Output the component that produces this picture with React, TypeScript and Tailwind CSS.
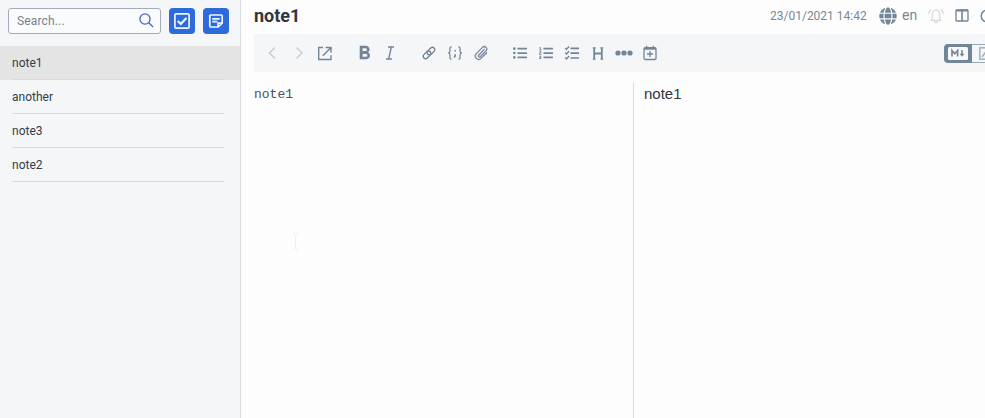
import type { ReactNode } from "react";
import { FaGlobe, FaListUl, FaListOl } from "react-icons/fa";
import { MdFormatBold } from "react-icons/md";

const notes = ["note1", "another", "note3", "note2"];

function Stroke({ size = 16, width = 1.5, children }: { size?: number; width?: number; children: ReactNode }) {
  return (
    <svg width={size} height={size} viewBox="0 0 16 16" fill="none" stroke="currentColor" strokeWidth={width}>
      {children}
    </svg>
  );
}

function Cell({ children }: { children: ReactNode }) {
  return <span className="flex h-[26px] w-[26px] shrink-0 items-center justify-center">{children}</span>;
}

function Sidebar() {
  return (
    <aside className="flex w-[241px] shrink-0 flex-col border-r border-[#d9dbde] bg-[#f4f6f8]">
      <div className="flex h-[46px] items-start gap-2 pl-2 pt-2">
        <div className="flex h-[26px] w-[153px] items-center justify-between rounded-[3px] border border-[#a3adb9] bg-[#fafbfc] pl-2 pr-[6px]">
          <span className="text-[12px] leading-[15px] tracking-[0.15px] text-[#77818d]">Search...</span>
          <svg width="16" height="16" viewBox="0 0 16 16" fill="none" stroke="#4664c0" strokeWidth="1.3" className="-translate-y-px">
            <circle cx="7" cy="7" r="5.1" />
            <path d="M10.8 10.8 15 15" />
          </svg>
        </div>
        <div className="flex h-[26px] w-[26px] items-center justify-center rounded-[4px] bg-[#2d6bdc] text-[#eef4ff]">
          <Stroke width={1.7}>
            <rect x="0.9" y="0.9" width="14.2" height="14.2" rx="1.2" />
            <path d="m3.8 8 3 3 5.6-6" strokeWidth="2.2" />
          </Stroke>
        </div>
        <div className="flex h-[26px] w-[26px] items-center justify-center rounded-[4px] bg-[#2d6bdc] text-[#eef4ff]">
          <Stroke width={1.7}>
            <path d="M2.8 2h10.4a1 1 0 0 1 1 1v7.2L10.3 14H2.8a1 1 0 0 1-1-1V3a1 1 0 0 1 1-1ZM10 14v-3.8h4.2" />
            <path d="M4.3 5.8h7.4M4.3 8.6h5" />
          </Stroke>
        </div>
      </div>
      <ul>
        {notes.map((note, i) => (
          <li key={note} className={`flex h-[34px] pl-3 pr-4 text-[12px] text-[#353d48] ${i === 0 ? "bg-[#e4e4e4]" : ""}`}>
            <span className="w-full border-b border-[#d8dadd] leading-[35px]">{note}</span>
          </li>
        ))}
      </ul>
    </aside>
  );
}

function TitleBar() {
  return (
    <header className="flex h-[34px] items-start text-[#738598]">
      <h1 className="flex-1 text-[18px] font-bold leading-[31px] text-[#303640]">note1</h1>
      <div className="flex h-[31px] w-[215px] shrink-0 items-center overflow-hidden whitespace-nowrap">
        <span className="w-[109px] shrink-0 text-[12px] text-[#7c8794]">23/01/2021 14:42</span>
        <FaGlobe size={18} className="shrink-0" />
        <span className="ml-[5px] w-[26px] shrink-0 text-[14px] text-[#7c8794]">en</span>
        <svg className="shrink-0" width="16" height="16" viewBox="0 0 16 16" fill="none" stroke="#d0d4d9" strokeWidth="1.1">
          <path d="M8 1v1M3.2 12.3c1.3-1.3 1-2.6 1-4.7C4.2 4.3 5.5 2 8 2s3.8 2.3 3.8 5.6c0 2.1-.3 3.4 1 4.7H3.2ZM6.4 12.5c0 3 3.2 3 3.2 0M3.4 1.2C1.7 2.2.9 3.8.8 6M12.6 1.2c1.7 1 2.5 2.6 2.6 4.8" />
        </svg>
        <span className="ml-[11px] flex w-[25px] shrink-0">
          <svg width="14" height="13" viewBox="0 0 14 13" fill="none" stroke="currentColor">
            <rect x="1" y="1" width="12" height="11" rx=".7" strokeWidth="1.3" />
            <path d="M1 1.5h12" strokeWidth="2" />
            <path d="M7 1v11" strokeWidth="1.6" />
          </svg>
        </span>
        <svg className="shrink-0" width="14" height="14" viewBox="0 0 14 14" fill="none" stroke="currentColor" strokeWidth="1.5">
          <circle cx="7" cy="7" r="5.8" />
          <path d="M7 6v4M7 3.5V5" />
        </svg>
      </div>
    </header>
  );
}

function Toolbar() {
  return (
    <div className="flex h-[38px] items-center bg-[#f4f6f8] pl-[6px] text-[#738598]">
      <div className="flex text-[#c8cdd4]">
        <Cell><Stroke width={1.4}><path d="m10 2.5-5.5 5.5 5.5 5.5" /></Stroke></Cell>
        <Cell><Stroke width={1.4}><path d="m5.5 2.5 5.5 5.5-5.5 5.5" /></Stroke></Cell>
      </div>
      <Cell>
        <Stroke width={1.4}><path d="M6 2.5H1.7v12H14v-4.2M5.8 10.7l8-8M8.7 2.5H14v5.3" /></Stroke>
      </Cell>
      <div className="ml-[13px] flex">
        <Cell><MdFormatBold size={23} /></Cell>
        <Cell>
          <svg width="10" height="14" viewBox="0 0 10 14" fill="none" stroke="currentColor" strokeWidth="1.4">
            <path d="M3 1h6M1 13h6M6.3 1 3.7 13" />
          </svg>
        </Cell>
      </div>
      <div className="ml-[13px] flex">
        <Cell>
          <svg width="14" height="14" viewBox="0 0 24 24" fill="none" stroke="currentColor" strokeWidth="2.3" strokeLinecap="round">
            <path d="M10.5 14.8a4.4 4.4 0 0 1-.6-6.2l5.1-5.1a4 4 0 0 1 5.7 5.7l-4.8 4.8a4 4 0 0 1-3.5 1" />
            <path d="M13.5 9.2a4.4 4.4 0 0 1 .6 6.2L9 20.5a4 4 0 0 1-5.7-5.7L8.1 10a4 4 0 0 1 3.5-1" />
          </svg>
        </Cell>
        <Cell>
          <Stroke width={1.2}>
            <path d="M4.6 1.8C2.4 1.8 3 3.6 3 5.3S2.5 8 1.2 8C2.5 8 3 9 3 10.7s-.6 3.5 1.6 3.5M11.4 1.8c2.2 0 1.6 1.8 1.6 3.5S13.5 8 14.8 8C13.5 8 13 9 13 10.7s.6 3.5-1.6 3.5" />
            <path d="M8.2 5v1.6M8.2 9.3v1.4l-1 2" strokeWidth="1.5" />
          </Stroke>
        </Cell>
        <Cell>
          <Stroke width={1.25}>
            <path strokeLinecap="round" d="m11.2 4.5-5.6 5.7a1.15 1.15 0 0 0 1.7 1.6l5.7-5.9a2.4 2.4 0 0 0-3.5-3.5L3.3 8.6a3.35 3.35 0 0 0 4.8 4.8l5.6-5.7" />
          </Stroke>
        </Cell>
      </div>
      <div className="ml-[13px] flex">
        <Cell><FaListUl size={14} /></Cell>
        <Cell><FaListOl size={14} /></Cell>
        <Cell>
          <Stroke width={1.4}>
            <path d="M6.5 3.4H15M6.5 8.2H15M6.5 13H15" strokeWidth="1.7" />
            <path d="m1.2 3 1.3 1.3 2.6-2.8M1.2 7.8l1.3 1.3 2.6-2.8M1.2 12.6l1.3 1.3 2.6-2.8" />
          </Stroke>
        </Cell>
        <Cell>
          <svg width="12" height="13" viewBox="0 0 12 13" fill="none" stroke="currentColor">
            <path d="M2.2 1v11M9.8 1v11M2.2 6.5h7.6" strokeWidth="1.8" />
            <path d="M.8.9h2.8M8.4.9h2.8M.8 12.1h2.8M8.4 12.1h2.8" strokeWidth="1.1" />
          </svg>
        </Cell>
        <Cell>
          <svg width="18" height="6" viewBox="0 0 18 6" fill="currentColor">
            <circle cx="3" cy="3" r="2.6" /><circle cx="9" cy="3" r="2.6" /><circle cx="15" cy="3" r="2.6" />
          </svg>
        </Cell>
        <Cell>
          <Stroke width={1.3}>
            <rect x="2" y="2.7" width="12" height="11.8" rx="1.2" />
            <path d="M2 3.7h12" strokeWidth="2" />
            <path d="M4.6.8v2M11.4.8v2M8 6v6M5 9h6" />
          </Stroke>
        </Cell>
      </div>
      <div className="ml-auto flex h-[19px] w-[41px] shrink-0 overflow-hidden rounded-l-[4px]">
        <div className="flex w-7 shrink-0 items-center justify-center bg-[#738598]">
          <svg width="20" height="13" viewBox="0 0 20 13" fill="none" stroke="#738598">
            <rect width="20" height="13" rx="1.5" fill="#f7f9fb" stroke="none" />
            <path d="M4 9.5v-6l2.8 3.2 2.8-3.2v6" strokeWidth="1.6" />
            <path d="M14 3v5" strokeWidth="1.5" />
            <path d="m11.5 6.8 2.5 3 2.5-3Z" fill="#738598" stroke="none" />
          </svg>
        </div>
        <div className="flex flex-1 items-center border-y border-[#9aa7b5] pl-[7px] text-[#a7b0bb]">
          <svg className="shrink-0" width="18" height="13" viewBox="0 0 18 13" fill="none" stroke="currentColor" strokeWidth="1.5">
            <rect x=".8" y=".8" width="16.4" height="11.4" />
            <path d="m3 10 3-4 3 3 3-4 4 5" />
          </svg>
        </div>
      </div>
    </div>
  );
}

export default function App() {
  return (
    <div className="flex h-[418px] w-[985px] overflow-hidden bg-[#fdfdfd] font-[Roboto,sans-serif]">
      <Sidebar />
      <main className="flex min-w-0 flex-1 flex-col pl-[13px]">
        <TitleBar />
        <Toolbar />
        <div className="mt-[10px] flex flex-1">
          <div className="w-[379px] pt-[5px] font-['Liberation_Mono',monospace] text-[13px] leading-[15px] text-[#4a5058]">
            note1
            <svg className="ml-[38px] mt-[131px]" width="7" height="17" viewBox="0 0 7 17" fill="none" stroke="#f0f0f0">
              <path d="M1 .5h2M4 .5h2M3.5 1v15M1 16.5h2M4 16.5h2" />
            </svg>
          </div>
          <div className="flex-1 border-l border-[#dcdcdc] pl-[10px] pt-[3px] font-['Liberation_Sans',sans-serif] text-[15px] leading-[18px] text-[#30363e]">note1</div>
        </div>
      </main>
    </div>
  );
}
